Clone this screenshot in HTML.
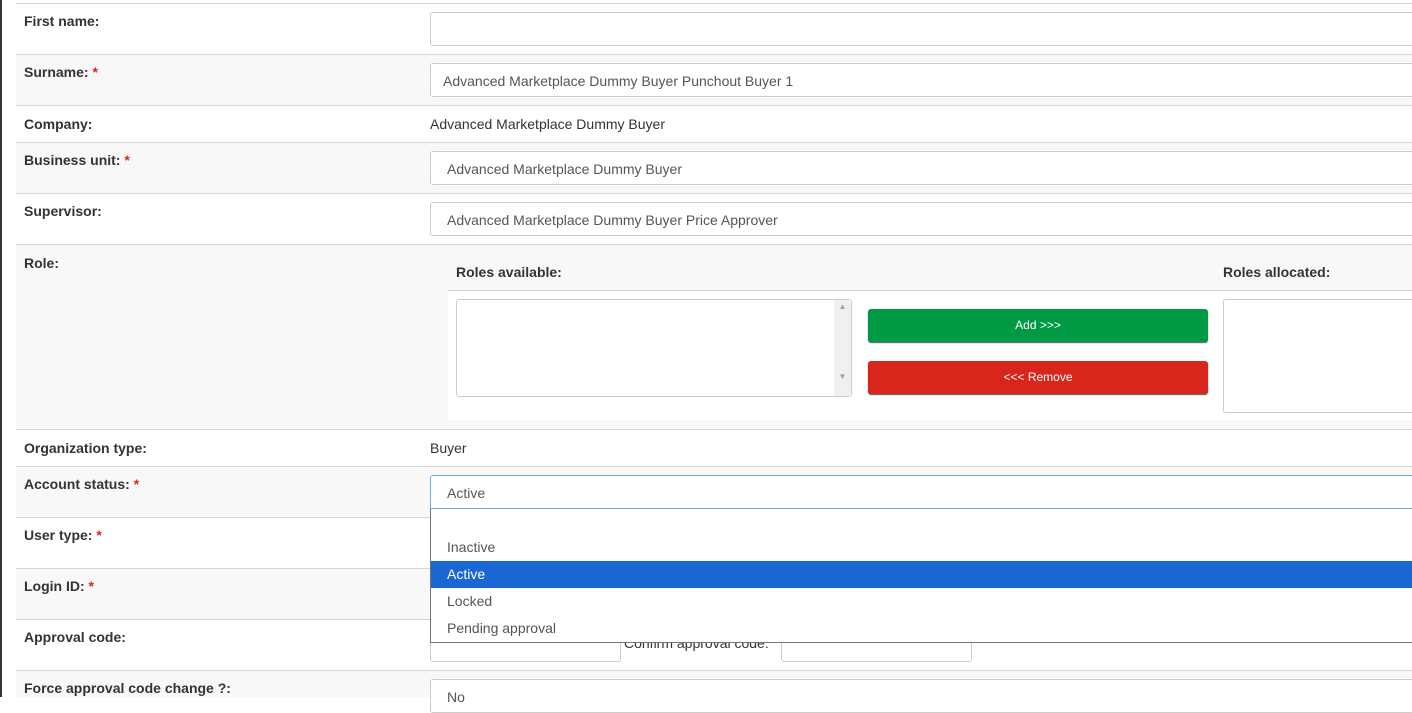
<!DOCTYPE html><html><head><style>
*{box-sizing:border-box;margin:0;padding:0}
body{width:1412px;height:697px;overflow:hidden;background:#fff;font-family:"Liberation Sans",sans-serif;font-size:14px;color:#333;position:relative}
.a{position:absolute}
.row{position:absolute;left:16px;right:0;border-top:1px solid #d4d4d4}
.g{background:#f8f8f8}
.lbl{position:absolute;left:24px;font-weight:bold;font-size:14px;color:#333}
.st{color:#d9261c}
.in{position:absolute;left:430px;width:1000px;height:34px;border:1px solid #ccc;border-radius:3px;background:#fff;padding:9px 16px;font-size:14px;color:#555}
.t{position:absolute;font-size:14px;color:#333}
</style></head><body>
<div class="a" style="left:0;top:0;width:2px;height:697px;background:#333"></div>
<div class="row" style="top:3px;height:51px"></div>
<div class="row g" style="top:54px;height:51px"></div>
<div class="row" style="top:105px;height:37px"></div>
<div class="row g" style="top:142px;height:51px"></div>
<div class="row" style="top:193px;height:51px"></div>
<div class="row g" style="top:244px;height:185px"></div>
<div class="row" style="top:429px;height:37px"></div>
<div class="row g" style="top:466px;height:51px"></div>
<div class="row" style="top:517px;height:51px"></div>
<div class="row g" style="top:568px;height:51px"></div>
<div class="row" style="top:619px;height:51px"></div>
<div class="row g" style="top:670px;height:27px"></div>

<div class="lbl" style="top:13px">First name:</div>
<div class="lbl" style="top:64px">Surname: <span class="st">*</span></div>
<div class="lbl" style="top:116px">Company:</div>
<div class="lbl" style="top:152px">Business unit: <span class="st">*</span></div>
<div class="lbl" style="top:203px">Supervisor:</div>
<div class="lbl" style="top:255px">Role:</div>
<div class="lbl" style="top:440px">Organization type:</div>
<div class="lbl" style="top:476px">Account status: <span class="st">*</span></div>
<div class="lbl" style="top:527px">User type: <span class="st">*</span></div>
<div class="lbl" style="top:578px">Login ID: <span class="st">*</span></div>
<div class="lbl" style="top:629px">Approval code:</div>
<div class="lbl" style="top:680px">Force approval code change ?:</div>

<div class="in" style="top:12px"></div>
<div class="in" style="top:63px;padding-left:12px">Advanced Marketplace Dummy Buyer Punchout Buyer 1</div>
<div class="t" style="left:430px;top:116px">Advanced Marketplace Dummy Buyer</div>
<div class="in" style="top:151px">Advanced Marketplace Dummy Buyer</div>
<div class="in" style="top:202px">Advanced Marketplace Dummy Buyer Price Approver</div>

<div class="a" style="left:448px;top:253px;width:964px;height:167px;background:#fff"></div>
<div class="a" style="left:448px;top:253px;width:964px;height:38px;background:#f8f8f8;border-bottom:1px solid #d4d4d4"></div>
<div class="t" style="left:456px;top:264px;font-weight:bold">Roles available:</div>
<div class="t" style="left:1223px;top:264px;font-weight:bold">Roles allocated:</div>
<div class="a" style="left:456px;top:299px;width:396px;height:98px;border:1px solid #ccc;border-radius:3px;background:#fff"></div>
<div class="a" style="left:834px;top:300px;width:17px;height:96px;background:#f0f0f0;font-size:8px;color:#a0a0a0;text-align:center;line-height:14px">▲<br><br><br><br><br>▼</div>
<div class="a" style="left:868px;top:309px;width:340px;height:33px;background:#009a44;border-radius:3px;box-shadow:0 1px 1px #555;color:#fff;font-size:12px;text-align:center;line-height:32px">Add &gt;&gt;&gt;</div>
<div class="a" style="left:868px;top:361px;width:340px;height:33px;background:#d9261c;border-radius:3px;box-shadow:0 1px 1px #555;color:#fff;font-size:12px;text-align:center;line-height:32px">&lt;&lt;&lt; Remove</div>
<div class="a" style="left:1223px;top:299px;width:200px;height:114px;border:1px solid #ccc;border-radius:3px;background:#fff"></div>

<div class="t" style="left:430px;top:440px">Buyer</div>
<div class="in" style="top:475px;border-color:#66afe9;border-radius:3px 3px 0 0">Active</div>

<div class="in" style="top:628px;width:191px;height:34px"></div>
<div class="t" style="left:624px;top:635px">Confirm approval code:</div>
<div class="in" style="left:781px;top:628px;width:191px;height:34px"></div>
<div class="in" style="top:679px">No</div>

<div class="a" style="left:430px;top:509px;width:990px;height:134px;background:#fff;border:1px solid #767676;border-top:none"></div>
<div class="t" style="left:447px;top:539px;color:#555">Inactive</div>
<div class="a" style="left:431px;top:561px;width:990px;height:27px;background:#1a66d2"></div>
<div class="t" style="left:447px;top:566px;color:#fff">Active</div>
<div class="t" style="left:447px;top:593px;color:#555">Locked</div>
<div class="t" style="left:447px;top:620px;color:#555">Pending approval</div>
</body></html>
